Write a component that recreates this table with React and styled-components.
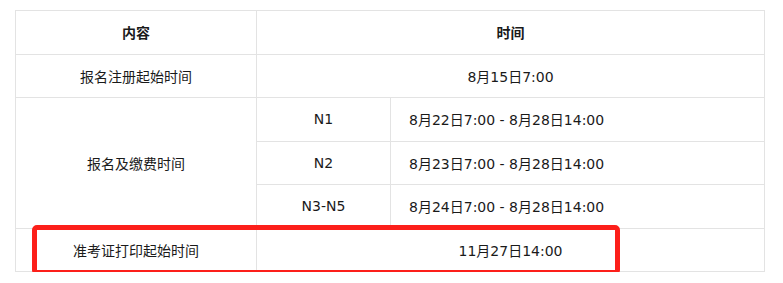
import React from "react";
import styled, { createGlobalStyle } from "styled-components";

const Global = createGlobalStyle`
  body {
    margin: 0;
    background: #fff;
    font-family: "DejaVu Sans", "Noto Sans CJK SC", sans-serif;
    color: #1a1a1a;
  }
`;

const Page = styled.div`
  padding: 10px 0 0 15px;
`;

const Wrap = styled.div`
  position: relative;
  width: 750px;
`;

const Table = styled.table`
  width: 750px;
  border-collapse: collapse;
  table-layout: fixed;
  font-size: 14px;
`;

const Row = styled.tr`
  height: 43.5px;
`;

const Cell = styled.td`
  border: 1px solid #e3e3e3;
  padding: 0 18px;
  text-align: ${(p) => (p.$left ? "left" : "center")};
  font-weight: ${(p) => (p.$head ? 700 : 400)};
  vertical-align: middle;
  white-space: nowrap;
`;

const Highlight = styled.div`
  position: absolute;
  left: 17px;
  top: 215px;
  width: 588px;
  height: 50px;
  box-sizing: border-box;
  border: 5px solid #fc1f1a;
  border-radius: 5px;
  pointer-events: none;
`;

const levels = [
  ["N1", "8月22日7:00 - 8月28日14:00"],
  ["N2", "8月23日7:00 - 8月28日14:00"],
  ["N3-N5", "8月24日7:00 - 8月28日14:00"],
];

export default function App() {
  return (
    <Page>
      <Global />
      <Wrap>
        <Table>
          <colgroup>
            <col style={{ width: 241 }} />
            <col style={{ width: 134 }} />
            <col />
          </colgroup>
          <tbody>
            <Row>
              <Cell $head>内容</Cell>
              <Cell $head colSpan={2}>时间</Cell>
            </Row>
            <Row>
              <Cell>报名注册起始时间</Cell>
              <Cell colSpan={2}>8月15日7:00</Cell>
            </Row>
            {levels.map(([lv, time], i) => (
              <Row key={lv}>
                {i === 0 && <Cell rowSpan={3}>报名及缴费时间</Cell>}
                <Cell>{lv}</Cell>
                <Cell $left>{time}</Cell>
              </Row>
            ))}
            <Row>
              <Cell>准考证打印起始时间</Cell>
              <Cell colSpan={2}>11月27日14:00</Cell>
            </Row>
          </tbody>
        </Table>
        <Highlight />
      </Wrap>
    </Page>
  );
}
